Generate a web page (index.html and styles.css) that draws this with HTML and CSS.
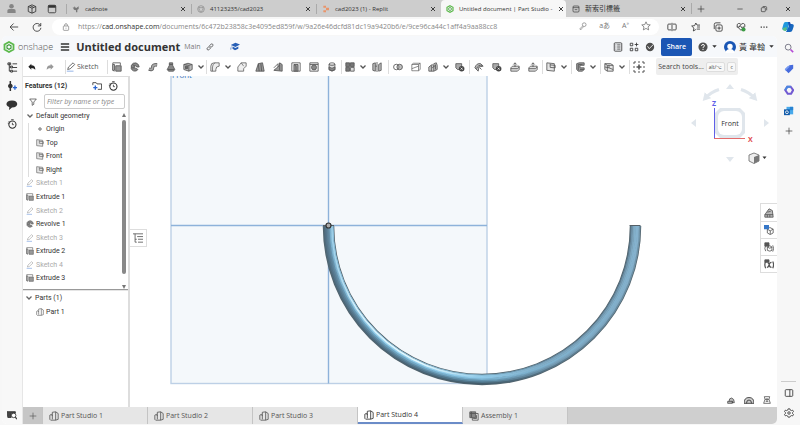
FILE: index.html
```html
<!DOCTYPE html>
<html lang="en">
<head>
<meta charset="utf-8">
<title>Untitled document | Part Studio 4</title>
<link rel="stylesheet" href="styles.css">
</head>
<body>
<svg class="defs" aria-hidden="true">
  <symbol id="close" viewBox="0 0 12 12"><path d="M3 3l6 6M9 3L3 9" stroke-width="1.4"/></symbol>
  <symbol id="plus" viewBox="0 0 12 12"><path d="M6 1v10M1 6h10"/></symbol>
  <symbol id="caret" viewBox="0 0 8 8"><path d="M1.500 2.500L4 5l2.500-2.500" stroke-width="1.300"/></symbol>
  <symbol id="solidcaret" viewBox="0 0 8 8"><path d="M1.500 2.500h5L4 5.500z" fill="currentColor" stroke="none"/></symbol>
  <symbol id="onshape" viewBox="0 0 12 12"><path d="M6 1l4.500 2.500v5L6 11 1.500 8.500v-5z" stroke="#5cb94b" stroke-width="1.800"/><path d="M6 3.700l2 1.100v2.400L6 8.300 4 7.200V4.800z" stroke="#3f9a3b" stroke-width="1.200"/></symbol>
  <symbol id="person" viewBox="0 0 12 12"><circle cx="6" cy="3.500" r="2.500" fill="#858585" stroke="none"/><path d="M1.500 11V8.500q0-2 2-2h5q2 0 2 2V11z" fill="#858585" stroke="none"/></symbol>
  <symbol id="cube" viewBox="0 0 12 12"><path d="M6 1l4.500 2v6L6 11 1.500 9V3zM1.500 3L6 5l4.500-2M6 5v6M3.800 2L8 4"/></symbol>
  <symbol id="window" viewBox="0 0 12 12"><rect x="1.500" y="1.500" width="9" height="9" rx="1.500"/><path d="M1.500 3h9" stroke-width="3"/></symbol>
  <symbol id="bird" viewBox="0 0 12 12"><path d="M1 3l2 1 1-2 2 3 4-3v4L8 7v4H6V8L3 7z" fill="#777" stroke="none"/></symbol>
  <symbol id="github" viewBox="0 0 12 12"><circle cx="6" cy="6" r="5" stroke="#888" stroke-width="1"/><path d="M4.800 11V8.500Q3 8 3 5.500V3l1.500 1h3L9 3v2.500Q9 8 7.200 8.500V11" stroke="#888"/></symbol>
  <symbol id="replit" viewBox="0 0 12 12"><path d="M2 1h4v3.300H2zM6 4.300h4.500v3.400H6zM2 7.700h4V11H2z" fill="#e9946a" stroke="none"/></symbol>
  <symbol id="page" viewBox="0 0 12 12"><rect x="1.500" y="1.500" width="9" height="9" rx="1.500"/><path d="M1.500 4h9M4 7h4"/></symbol>
  <symbol id="min" viewBox="0 0 12 12"><path d="M2 6h8"/></symbol>
  <symbol id="restore" viewBox="0 0 12 12"><rect x="2" y="4" width="6" height="6" rx="1"/><path d="M4 2.300h4.500Q10 2.300 10 4v4"/></symbol>
  <symbol id="back" viewBox="0 0 12 12"><path d="M11 6H1.500M5.500 1.800L1.300 6l4.200 4.200"/></symbol>
  <symbol id="reload" viewBox="0 0 12 12"><path d="M10.300 4.500A4.700 4.700 0 1 0 10.700 7M10.500 1.200v3.500H7"/></symbol>
  <symbol id="lock" viewBox="0 0 12 12"><rect x="2" y="4.500" width="8" height="6.500" rx="1"/><path d="M4 4.500V3q0-2 2-2t2 2v1.500M6 7v1.500"/></symbol>
  <symbol id="key" viewBox="0 0 12 12"><circle cx="7.800" cy="4" r="2.800"/><path d="M5.500 6L1.500 10v1h2l1-1.500L7 7"/></symbol>
  <symbol id="star" viewBox="0 0 12 12"><path d="M6 1l1.500 3.300 3.600.4-2.700 2.400.8 3.600L6 8.900l-3.200 1.800.8-3.600L.9 4.700l3.600-.4z"/></symbol>
  <symbol id="split" viewBox="0 0 12 12"><path d="M6 1v10M5 2.500H2q-1 0-1 1v5q0 1 1 1h3M7 2.500h3q1 0 1 1v5q0 1-1 1H7"/></symbol>
  <symbol id="favs" viewBox="0 0 12 12"><path d="M7 9l-3 1.800.7-3.500L2 4.800l3.500-.4L7 1.200l1.400 2.500H12M8.500 6H12M8 8.500h4"/></symbol>
  <symbol id="collect" viewBox="0 0 12 12"><rect x="3.500" y="3.500" width="7.500" height="7.500" rx="1.500"/><path d="M1.500 8.500V3q0-2 2-2H9M7.300 5.300v4M5.300 7.300h4"/></symbol>
  <symbol id="heart" viewBox="0 0 12 12"><path d="M6 10L1.500 5.500Q.5 2.500 3 1.800 5 1.500 6 3.200 7 1.500 9 1.800q2.500.7 1.500 3.700zM1 6h3l1-2 2 3 1-1h2"/><circle cx="9" cy="9" r="2.500" fill="#3b9b45" stroke="none"/></symbol>
  <symbol id="dots" viewBox="0 0 12 12"><path d="M2 6h1.500M5.300 6h1.500M8.500 6H10" stroke-width="1.500"/></symbol>
  <symbol id="copilot" viewBox="0 0 12 12"><path d="M3.500 1h4L5.500 9H2Q-.500 9 .500 6.500l1-3.500Q2 1 3.500 1z" fill="#2098dd" stroke="none"/><path d="M8 3h2q2.500 0 1.500 3l-1 3q-.500 2-2.500 2H4z" fill="#1767be" stroke="none"/><path d="M1 7l4-1-1 4Q1 10.500.7 8z" fill="#58bd86" stroke="none"/><path d="M6 1h2l1 3L7 6z" fill="#1b52b5" stroke="none"/></symbol>
  <symbol id="search" viewBox="0 0 12 12"><circle cx="5" cy="5" r="3.500" stroke="#667"/><path d="M7.800 7.800L11 11" stroke="#b54bd6" stroke-width="2"/></symbol>
  <symbol id="tag" viewBox="0 0 12 12"><path d="M1 6.500L6.500 1.500 11 1v4.500L5.500 11z" fill="#466bdc" stroke="none"/><path d="M1 6l4-4 2 1-5 5z" fill="#779af1" stroke="none"/></symbol>
  <symbol id="m365" viewBox="0 0 12 12"><path d="M4 2h4l3 4-2.500 4.500h-4L1.500 6z" stroke="#725ad2" stroke-width="2.500"/><path d="M1.500 6L4 2h4" stroke="#4a87df" stroke-width="2.500"/></symbol>
  <symbol id="outlook" viewBox="0 0 12 12"><path d="M3 1h8v9H3z" fill="#48a9eb" stroke="none"/><path d="M7 1h4v4H7z" fill="#2783d2" stroke="none"/><path d="M0 4h7v7H0z" fill="#125ba9" stroke="none"/><circle cx="3.500" cy="7.500" r="1.700" stroke="#fff"/></symbol>
  <symbol id="gear" viewBox="0 0 12 12"><path d="M5 1h2l.500 1.500 1.500.6 1.400-.5 1 1.700-1.100 1.100v1.400l1.100 1-1 1.700-1.400-.4-1.500.8L7 11H5l-.500-1.300L3 9l-1.400.4-1-1.700 1.100-1V5.400L.6 4.300l1-1.700 1.400.5 1.500-.6z"/><circle cx="6" cy="6" r="1.500"/></symbol>
  <symbol id="sidepane" viewBox="0 0 12 12"><rect x="1.500" y="2" width="9" height="8" rx="1"/><path d="M7 2v8"/></symbol>
  <symbol id="menu" viewBox="0 0 12 12"><path d="M1 2.300h10M1 6h10M1 9.700h10" stroke-width="1.800"/></symbol>
  <symbol id="link" viewBox="0 0 12 12"><path d="M5 7.500Q3.500 6 5 4.500l2.300-2.700q1.500-1 2.700 0t0 2.700L8.500 6M7 4.500Q8.500 6 7 7.500L4.700 10q-1.500 1-2.700 0t0-2.700L3.500 6"/></symbol>
  <symbol id="cap" viewBox="0 0 12 12"><path d="M1 3.500L6.500 1 12 3 6.500 6zM3 5.500l3.500 1.800L10 5.500V8L6 10 3 8zM1.500 4v5H.500z" fill="#2860b6" stroke="none"/></symbol>
  <symbol id="sheet" viewBox="0 0 12 12"><rect x="1.500" y="1" width="9" height="10" rx="1"/><path d="M3 3.500h1M5 3.500h4M3 6h1M5 6h4M3 8.500h1M5 8.500h4"/></symbol>
  <symbol id="apps" viewBox="0 0 12 12"><path d="M1.500 1.500h3v3h-3zM1.500 7.500h3v3h-3zM7.500 7.500h3v3h-3zM9 .8v4.400M6.800 3h4.400"/></symbol>
  <symbol id="globe" viewBox="0 0 12 12"><circle cx="6" cy="6" r="5" fill="#505050" stroke="none"/><path d="M3 5l2 3 5-5" stroke="#fff"/></symbol>
  <symbol id="help" viewBox="0 0 12 12"><circle cx="6" cy="6" r="5.500" fill="#505050" stroke="none"/><path d="M4.200 4.700Q4.300 3 6 3t1.800 1.500Q7.800 5.500 6 6.500v.8M6 8.300v1.300" stroke="#fff" stroke-width="1.200"/></symbol>
  <symbol id="user" viewBox="0 0 12 12"><circle cx="6" cy="6" r="6" fill="#1956b5" stroke="none"/><circle cx="6" cy="5.500" r="2.700" fill="#fff" stroke="none"/><path d="M1.500 12Q2 8 6 8t4.500 4z" fill="#fff" stroke="none"/></symbol>
  <symbol id="tree" viewBox="0 0 12 12"><path d="M2.500 1v9h2M2.500 5.500h2M6 2h5M6.500 6H11M6.500 10H11" /><path d="M1 1h3v2H1zM4 4.500h2v2H4zM4 9h2v2H4z"/></symbol>
  <symbol id="undo" viewBox="0 0 12 12"><path d="M5 1v2.500q6 0 6 6.500Q9 7.500 5 7.500V10L.5 5.500z" fill="currentColor" stroke="none"/></symbol>
  <symbol id="redo" viewBox="0 0 12 12"><path d="M7 1v2.500q-6 0-6 6.500Q3 7.500 7 7.500V10l4.500-4.500z" fill="currentColor" stroke="none"/></symbol>
  <symbol id="pencil" viewBox="0 0 12 12"><path d="M2 9l1-3 5.500-5 2 2L5 8.200z"/><path d="M1 11h8" stroke="#7fa5e3"/></symbol>
  <symbol id="extrude" viewBox="0 0 12 12"><path d="M1 1h9v3M1 1v9l2 1" /><path d="M4.500 4.500H11V11H4.500z" fill="#999"/><path d="M1 3h2v7H1z" fill="#ccc"/></symbol>
  <symbol id="revolve" viewBox="0 0 12 12"><path d="M10 3Q7.500 0 4 1.500T1.500 8Q3.500 12 8 10.500L9.500 9 7 7.500Q5 8 5 6t2-1.500L8 6h3z" fill="#888"/><path d="M3 3l3 2M2 7h3"/></symbol>
  <symbol id="sweep" viewBox="0 0 12 12"><path d="M1 8.500q4.500 1.500 4.500-2T11 3.500" stroke="#666" stroke-width="4.200"/><path d="M1.500 8.500q4 1.500 4-2T10.500 3.500" stroke="#aaa" stroke-width="2"/></symbol>
  <symbol id="loft" viewBox="0 0 12 12"><path d="M4 1h4v3l2.500 5-1.500 2H3L1.500 9 4 4z" fill="#888"/><path d="M4 3h4M2 9h8"/></symbol>
  <symbol id="solid" viewBox="0 0 12 12"><path d="M1 3l5-1.500L11 3v6l-4 2-6-2z" fill="#bbb"/><path d="M1 3l6 1 4-1M7 4v7"/><path d="M3 5h2.500v3H3z" fill="#666"/></symbol>
  <symbol id="fillet" viewBox="0 0 12 12"><path d="M1 11V5q0-4 4-4h6v4q-4 0-4 4v2z" fill="#eee" stroke-width=".9"/><path d="M3 11V6q0-3 3-5" stroke-width=".8"/></symbol>
  <symbol id="chamfer" viewBox="0 0 12 12"><path d="M1 11V6l4-5h6v4L8 8v3z" fill="#eee" stroke-width=".9"/><path d="M5 1l3 4" stroke-width=".8"/></symbol>
  <symbol id="wedge" viewBox="0 0 12 12"><path d="M1 10L7 5l1-4 3 2v8z" fill="#9a9a9a"/><path d="M1 7l5-5v4M8 3v7"/></symbol>
  <symbol id="draft" viewBox="0 0 12 12"><path d="M1 11L4 2l5-1 2 10z" fill="#999"/><path d="M4 2l1 9M7 2l1 9"/></symbol>
  <symbol id="shell" viewBox="0 0 12 12"><path d="M1 1h10v10H1z"/><path d="M3.500 3h5v8h-5z" fill="#999"/><path d="M3.500 3L6 5v6"/></symbol>
  <symbol id="hole" viewBox="0 0 12 12"><path d="M1 1h10v10H1z" fill="#eee"/><circle cx="6" cy="6.500" r="3" fill="#888"/><path d="M1 3h10"/></symbol>
  <symbol id="cylinder" viewBox="0 0 12 12"><path d="M2.500 2.500v7q3.500 3 7 0v-7" fill="#ddd"/><ellipse cx="6" cy="2.500" rx="3.500" ry="1.500"/><path d="M2.500 6q3.500 3 7 0v3q-3.500 3-7 0z" fill="#888"/></symbol>
  <symbol id="pattern" viewBox="0 0 12 12"><path d="M1 1h4.500v4.500H1zM6.500 1H11v4.500H6.500zM1 6.500h4.500V11H1z" fill="#777"/><path d="M6.500 6.500H11V11H6.500z" fill="#ddd"/></symbol>
  <symbol id="mirror" viewBox="0 0 12 12"><path d="M1 2l3-1v10l-3-1zM8 3l3-2v9l-3 1z" fill="#bbb"/><path d="M6 0v12M4 5h2"/></symbol>
  <symbol id="boolean" viewBox="0 0 12 12"><circle cx="4" cy="6" r="3.300"/><circle cx="8" cy="6" r="3.300" fill="#8888"/></symbol>
  <symbol id="splitpart" viewBox="0 0 12 12"><path d="M1 3l2-1.500h8V9l-2 1.500H1zM1 3h8l2-1.500M9 3v7.500M1 8l8-3" stroke-width=".8"/></symbol>
  <symbol id="transform" viewBox="0 0 12 12"><path d="M1 11V6l4-3 2 2v6zM7 5V2l3-1 1 3v5L7 11" fill="#ccc"/><path d="M4 4v7M9 3v6M5 7l4-3"/></symbol>
  <symbol id="delete" viewBox="0 0 12 12"><path d="M1 2h7v7H3L1 7z" fill="#aaa"/><circle cx="8" cy="8" r="3.300" fill="#444" stroke="none"/><path d="M6.800 6.800l2.400 2.400M9.200 6.800L6.800 9.200" stroke="#fff" stroke-width=".9"/></symbol>
  <symbol id="sheetmetal" viewBox="0 0 12 12"><path d="M1 7q2-6 7-5l3 3-5 1-1 5z" fill="#bbb"/><path d="M3 8q2-5 7-4M7 7l2 2"/></symbol>
  <symbol id="flange" viewBox="0 0 12 12"><path d="M1 7l2-2h8v4l-2 2H1z" fill="#ddd"/><path d="M1 8h8l2-2M6 6V1L4 3M6 1l2 2"/></symbol>
  <symbol id="plane" viewBox="0 0 12 12"><path d="M1 1l9 1v9L1 10z" fill="#e5e5e5"/><path d="M5 2v4.500l6 .5V4L5 3.500"/></symbol>
  <symbol id="frame" viewBox="0 0 12 12"><path d="M2 2l3-1h6v3H6v3h5v2L9 11H4L2 9z" fill="#999"/><path d="M4 3v7M4 3h5M6 9h5"/></symbol>
  <symbol id="surface" viewBox="0 0 12 12"><path d="M1 2h7l3 2v7H4L1 9z" fill="#e5e5e5"/><path d="M1 2l3 2h7M4 4v7M6 4v3l5 2M1 6l5 1"/></symbol>
  <symbol id="addtool" viewBox="0 0 12 12"><path d="M1 3V1h2M5 1h2M9 1h2v2M11 5v2M11 9v2H9M7 11H5M3 11H1V9M1 7V5"/><path d="M6 3.500v5M3.500 6h5" stroke-width="1.600"/></symbol>
  <symbol id="insert" viewBox="0 0 12 12"><path d="M4 0v12" stroke-width="1.800"/><circle cx="4" cy="6" r="2.300" fill="#333"/><path d="M9.500 5.500v5M7 8h5" stroke="#2864d0" stroke-width="1.600"/></symbol>
  <symbol id="chat" viewBox="0 0 12 12"><path d="M6 1.500c7 0 7 7 0 7L3 11l.3-3C-1.500 6.500 0 1.500 6 1.500z" fill="#333" stroke="none"/></symbol>
  <symbol id="clock" viewBox="0 0 12 12"><circle cx="6.500" cy="6.700" r="4.300" stroke-width="1.300"/><path d="M6.500 4.500v2.300h1.700M5 .8h3M1 5h2M2 2.500l1.500 1.500"/></symbol>
  <symbol id="folder" viewBox="0 0 12 12"><path d="M1 5V2h4l1 1.500h5.500V10H7"/><path d="M4 5.500v5M1.500 8h5" stroke="#2864d0" stroke-width="1.600"/></symbol>
  <symbol id="filter" viewBox="0 0 12 12"><path d="M1 1.500h10L7.200 6v3.500L4.800 11V6z"/></symbol>
  <symbol id="origin" viewBox="0 0 12 12"><circle cx="6" cy="6" r="2" fill="#bbb"/></symbol>
  <symbol id="part" viewBox="0 0 12 12"><path d="M1 5l2-1 1 2V1.500L8 1l3 2v7l-3 1H2L1 10zM4 6v4M8 1v10"/></symbol>
  <symbol id="assembly" viewBox="0 0 12 12"><path d="M1 1h7v7H1z" fill="#888"/><path d="M8 3h3v8H4V8M5 9h4V5M1 3h7M3 1v7"/></symbol>
  <symbol id="zoomtab" viewBox="0 0 12 12"><path d="M0 2h10v2H5v5H1z" fill="#444"/><circle cx="8" cy="6.500" r="2.700" fill="#fff"/><path d="M10 8.500l2 2.500" stroke-width="1.500"/></symbol>
  <symbol id="listtree" viewBox="0 0 12 12"><path d="M0 1h12M2.500 1v10h2M5 4.300h7M2.500 7.500h2M6 7.500h6M6 11h6"/></symbol>
  <symbol id="props" viewBox="0 0 12 12"><path d="M1 8l5-7 4 2 1 8H1z" fill="#bbb"/><path d="M1 8h10M4 8v3M7 8v3M4 5l4-1"/></symbol>
  <symbol id="config" viewBox="0 0 12 12"><path d="M7 3l4 2v4.500L7.500 11.500 4 9.500V5zM4 5l3.500 2L11 5M7.500 7v4"/><path d="M0 0h6v5H0z" fill="#3577c8" stroke="none"/></symbol>
  <symbol id="configpart" viewBox="0 0 12 12"><path d="M1 1h5v4H1z" fill="#555"/><path d="M2 4Q0 8 2 11M10.500 4q2 4 0 7.500M4 6l3-1.500L9.500 6v4L7 11 4 10zM4 6l3 1.500L9.500 6"/></symbol>
  <symbol id="varx" viewBox="0 0 12 12"><path d="M1 1h5v3H1z" fill="#555"/><path d="M2 3Q0 7 2 11M10.500 3q2 4 0 8M3.500 10q2 0 2.500-3t3-3M4.500 5q2 0 2 2.500T9 10" stroke-width="1.500"/></symbol>
  <symbol id="tape" viewBox="0 0 12 12"><path d="M1 8h7v3H1zM3 8q0-5 4-5 4 1 4 7H8V8" fill="#bbb"/></symbol>
  <symbol id="protractor" viewBox="0 0 12 12"><path d="M0 10q0-7 6-7t6 7zM3 10q0-4 3-4t3 4" fill="#ccc"/></symbol>
  <symbol id="scale" viewBox="0 0 12 12"><path d="M2 1h8L9 5H3zM3 5L1 11h10L9 5M4 8h4M6 3v5"/></symbol>
</svg>

<div class="browser">
  <nav class="tabstrip" aria-label="Browser tabs">
    <div class="corner"><svg class="ic"><use href="#person"/></svg><svg class="ic s10"><use href="#cube"/></svg><svg class="ic s10"><use href="#window"/></svg></div>
    <div class="btab"><svg class="ic s8"><use href="#bird"/></svg><span>cadnote</span><button aria-label="Close tab"><svg class="ic s8"><use href="#close"/></svg></button></div>
    <div class="btab"><svg class="ic s8"><use href="#github"/></svg><span>41123235/cad2023</span><button aria-label="Close tab"><svg class="ic s8"><use href="#close"/></svg></button></div>
    <div class="btab"><svg class="ic s8"><use href="#replit"/></svg><span>cad2023 (1) - Replit</span><button aria-label="Close tab"><svg class="ic s8"><use href="#close"/></svg></button></div>
    <div class="btab active"><svg class="ic s8"><use href="#onshape"/></svg><span>Untitled document | Part Studio -</span><button aria-label="Close tab"><svg class="ic s8"><use href="#close"/></svg></button></div>
    <div class="btab last"><svg class="ic s8"><use href="#page"/></svg><span>新索引標籤</span><button aria-label="Close tab"><svg class="ic s8"><use href="#close"/></svg></button></div>
    <button class="newtab" aria-label="New tab"><svg class="ic s8"><use href="#plus"/></svg></button>
    <div class="winbtns"><button aria-label="Minimize"><svg class="ic s8"><use href="#min"/></svg></button><button aria-label="Restore"><svg class="ic s8"><use href="#restore"/></svg></button><button aria-label="Close"><svg class="ic s8"><use href="#close"/></svg></button></div>
  </nav>

  <div class="address">
    <button aria-label="Back"><svg class="ic s10"><use href="#back"/></svg></button>
    <button aria-label="Reload"><svg class="ic s10"><use href="#reload"/></svg></button>
    <div class="pill">
      <svg class="ic s8"><use href="#lock"/></svg>
      <a class="url" href="#">https://<b>cad.onshape.com</b>/documents/6c472b23858c3e4095ed859f/w/9a26e46dcfd81dc19a9420b6/e/9ce96ca44c1aff4a9aa88cc8</a>
      <div class="pillicons"><svg class="ic s8"><use href="#key"/></svg><span>aあ</span><span>A<sup>»</sup></span><svg class="ic s10"><use href="#star"/></svg></div>
    </div>
    <div class="extensions">
      <button aria-label="Split screen"><svg class="ic s10"><use href="#split"/></svg></button><button aria-label="Favorites"><svg class="ic s10"><use href="#favs"/></svg></button><button aria-label="Collections"><svg class="ic s10"><use href="#collect"/></svg></button><button aria-label="Essentials"><svg class="ic s10"><use href="#heart"/></svg></button><button aria-label="More"><svg class="ic s10"><use href="#dots"/></svg></button>
      <button aria-label="Copilot"><svg class="ic s12"><use href="#copilot"/></svg></button>
    </div>
  </div>

  <div class="body">
    <div class="app">
      <header class="docbar">
        <svg class="ic s12"><use href="#onshape"/></svg><span class="brand">onshape</span>
        <button class="menu" aria-label="Menu"><svg class="ic s10"><use href="#menu"/></svg></button>
        <h1>Untitled document</h1><span class="branch">Main</span>
        <svg class="ic s8"><use href="#link"/></svg><svg class="ic s10 cap"><use href="#cap"/></svg>
        <div class="account">
          <svg class="ic s10"><use href="#sheet"/></svg><svg class="ic s10"><use href="#apps"/></svg><svg class="ic s10"><use href="#globe"/></svg>
          <button class="share">Share</button>
          <svg class="ic s10"><use href="#help"/></svg><svg class="ic s6"><use href="#solidcaret"/></svg>
          <svg class="ic s12"><use href="#user"/></svg><span class="name">黃 韋翰</span><svg class="ic s6"><use href="#solidcaret"/></svg>
        </div>
      </header>

      <div class="work">
        <aside class="rail">
          <button aria-label="Feature list"><svg class="ic"><use href="#tree"/></svg></button>
          <button aria-label="Insert"><svg class="ic s10"><use href="#insert"/></svg></button>
          <button aria-label="Comments"><svg class="ic s12"><use href="#chat"/></svg></button>
          <button aria-label="History"><svg class="ic s10"><use href="#clock"/></svg></button>
          <button class="bottom" aria-label="Tab manager"><svg class="ic s10"><use href="#zoomtab"/></svg></button>
        </aside>
        <div class="main">
          <div class="toolbar">
            <div class="group history"><button aria-label="Undo"><svg class="ic s8"><use href="#undo"/></svg></button><button class="dim" aria-label="Redo"><svg class="ic s8"><use href="#redo"/></svg></button></div>
            <div class="group"><button class="sketch"><svg class="ic s10"><use href="#pencil"/></svg>Sketch</button></div>
            <div class="group"><button aria-label="Extrude"><svg class="ic s10"><use href="#extrude"/></svg></button><button aria-label="Revolve"><svg class="ic s10"><use href="#revolve"/></svg></button><button aria-label="Sweep"><svg class="ic s10"><use href="#sweep"/></svg></button><button aria-label="Loft"><svg class="ic s10"><use href="#loft"/></svg></button><button class="drop" aria-label="Thicken"><svg class="ic s10"><use href="#solid"/></svg><svg class="ic s8"><use href="#caret"/></svg></button></div>
            <div class="group"><button class="drop" aria-label="Fillet"><svg class="ic s10"><use href="#fillet"/></svg><svg class="ic s8"><use href="#caret"/></svg></button><button aria-label="Chamfer"><svg class="ic s10"><use href="#chamfer"/></svg></button><button aria-label="Draft"><svg class="ic s10"><use href="#draft"/></svg></button><button aria-label="Rib"><svg class="ic s10"><use href="#wedge"/></svg></button><button aria-label="Shell"><svg class="ic s10"><use href="#shell"/></svg></button><button aria-label="Hole"><svg class="ic s10"><use href="#hole"/></svg></button><button aria-label="Thread"><svg class="ic s10"><use href="#cylinder"/></svg></button></div>
            <div class="group loose"><button class="drop" aria-label="Pattern"><svg class="ic s10"><use href="#pattern"/></svg><svg class="ic s8"><use href="#caret"/></svg></button><button aria-label="Mirror"><svg class="ic s10"><use href="#mirror"/></svg></button></div>
            <div class="group"><button aria-label="Boolean"><svg class="ic s10"><use href="#boolean"/></svg></button><button aria-label="Split"><svg class="ic s10"><use href="#splitpart"/></svg></button><button class="drop" aria-label="Transform"><svg class="ic s10"><use href="#transform"/></svg><svg class="ic s8"><use href="#caret"/></svg></button><button aria-label="Delete part"><svg class="ic s10"><use href="#delete"/></svg></button></div>
            <div class="group"><button aria-label="Modify fillet"><svg class="ic s10"><use href="#sheetmetal"/></svg></button><button aria-label="Delete face"><svg class="ic s10"><use href="#delete"/></svg></button><button aria-label="Move face"><svg class="ic s10"><use href="#flange"/></svg></button><button aria-label="Replace face"><svg class="ic s10"><use href="#flange"/></svg></button></div>
            <div class="group loose"><button class="drop" aria-label="Plane"><svg class="ic s10"><use href="#plane"/></svg><svg class="ic s8"><use href="#caret"/></svg></button></div>
            <div class="group loose"><button class="drop" aria-label="Frame"><svg class="ic s10"><use href="#frame"/></svg><svg class="ic s8"><use href="#caret"/></svg></button></div>
            <div class="group loose"><button class="drop" aria-label="Surface"><svg class="ic s10"><use href="#surface"/></svg><svg class="ic s8"><use href="#caret"/></svg></button></div>
            <div class="group end"><button aria-label="Add custom features"><svg class="ic s12"><use href="#addtool"/></svg></button></div>
            <button class="searchtools">Search tools...<kbd>alt/⌥</kbd><kbd>c</kbd></button>
          </div>

          <div class="studio">
            <section class="panel">
              <div class="panelhead"><h2>Features (12)</h2><svg class="ic s10"><use href="#folder"/></svg><svg class="ic s10"><use href="#clock"/></svg></div>
              <div class="filter"><svg class="ic s8"><use href="#filter"/></svg><input type="text" placeholder="Filter by name or type" aria-label="Filter by name or type"></div>
              <div class="features">
                <ul class="list">
                  <li><svg class="ic s8"><use href="#caret"/></svg>Default geometry</li>
                  <li class="nested"><ul>
                    <li><svg class="ic s8"><use href="#origin"/></svg>Origin</li>
                    <li><svg class="ic s8"><use href="#plane"/></svg>Top</li>
                    <li><svg class="ic s8"><use href="#plane"/></svg>Front</li>
                    <li><svg class="ic s8"><use href="#plane"/></svg>Right</li>
                  </ul></li>
                  <li class="off"><svg class="ic s8"><use href="#pencil"/></svg>Sketch 1</li>
                  <li><svg class="ic s8"><use href="#extrude"/></svg>Extrude 1</li>
                  <li class="off"><svg class="ic s8"><use href="#pencil"/></svg>Sketch 2</li>
                  <li><svg class="ic s8"><use href="#revolve"/></svg>Revolve 1</li>
                  <li class="off"><svg class="ic s8"><use href="#pencil"/></svg>Sketch 3</li>
                  <li><svg class="ic s8"><use href="#extrude"/></svg>Extrude 2</li>
                  <li class="off"><svg class="ic s8"><use href="#pencil"/></svg>Sketch 4</li>
                  <li><svg class="ic s8"><use href="#extrude"/></svg>Extrude 3</li>
                </ul>
                <div class="scroll"><i class="up"></i><i class="thumb"></i><i class="down"></i></div>
              </div>
              <div class="rollback"></div>
              <ul class="parts">
                <li><svg class="ic s8"><use href="#caret"/></svg>Parts (1)</li>
                <li class="sub"><svg class="ic s8"><use href="#part"/></svg>Part 1</li>
              </ul>
            </section>

            <div class="canvas">
              <svg class="scene" viewBox="130 76 647 331" preserveAspectRatio="xMinYMin slice" role="img" aria-label="Model view">
                <defs>
                  <linearGradient id="g1" gradientUnits="userSpaceOnUse" x1="323" x2="641" y1="0" y2="0"><stop offset="0" stop-color="#4f6a7a"/><stop offset=".5" stop-color="#435c6b"/><stop offset="1" stop-color="#6f94aa"/></linearGradient>
                  <linearGradient id="g2" gradientUnits="userSpaceOnUse" x1="323" x2="641" y1="0" y2="0"><stop offset="0" stop-color="#54748a"/><stop offset=".5" stop-color="#4f7489"/><stop offset=".75" stop-color="#7298b0"/><stop offset="1" stop-color="#86b2ce"/></linearGradient>
                  <linearGradient id="g3" gradientUnits="userSpaceOnUse" x1="323" x2="641" y1="0" y2="0"><stop offset="0" stop-color="#5b7f95"/><stop offset=".5" stop-color="#6292ad"/><stop offset=".75" stop-color="#7ba5bf"/><stop offset="1" stop-color="#86b4d0"/></linearGradient>
                  <linearGradient id="g4" gradientUnits="userSpaceOnUse" x1="323" x2="641" y1="0" y2="0"><stop offset="0" stop-color="#638ba4"/><stop offset=".15" stop-color="#6a9fbc"/><stop offset=".5" stop-color="#7bb2d0"/><stop offset="1" stop-color="#83b0cb"/></linearGradient>
                  <linearGradient id="g5" gradientUnits="userSpaceOnUse" x1="323" x2="641" y1="0" y2="0"><stop offset="0" stop-color="#78abc8"/><stop offset=".18" stop-color="#94d0ed"/><stop offset=".5" stop-color="#8fc9e8"/><stop offset=".7" stop-color="#82aec8"/><stop offset="1" stop-color="#7ca5be"/></linearGradient>
                  <linearGradient id="g6" gradientUnits="userSpaceOnUse" x1="323" x2="641" y1="0" y2="0"><stop offset="0" stop-color="#8ac4e2"/><stop offset=".1" stop-color="#d0effc"/><stop offset=".3" stop-color="#e6faff"/><stop offset=".5" stop-color="#93cdeb"/><stop offset=".7" stop-color="#7ba5be"/><stop offset="1" stop-color="#6d91a8"/></linearGradient>
                  <linearGradient id="g7" gradientUnits="userSpaceOnUse" x1="323" x2="641" y1="0" y2="0"><stop offset="0" stop-color="#8abfdc"/><stop offset=".3" stop-color="#8dbdd5"/><stop offset=".5" stop-color="#7aabc5"/><stop offset=".7" stop-color="#62849a"/><stop offset="1" stop-color="#587486"/></linearGradient>
                  <marker id="tip" viewBox="0 0 8 8" refX="4" refY="4" markerWidth="9" markerHeight="9" markerUnits="userSpaceOnUse" orient="auto-start-reverse"><path d="M0 0l7 4-7 4z" fill="#e0e6ec"/></marker>
                </defs>
                <rect x="171" y="60" width="316" height="323.500" fill="#f4f8fb" stroke="#bdd0e6" stroke-width="1.400"/>
                <text x="172" y="78" class="planename">Front</text>
                <path d="M171 225.500h316M328.500 60v323.500" stroke="#8db2da" fill="none" stroke-width="1.400"/>
                <g fill="none" stroke-width="2">
                  <path d="M328.500 226a153.500 153.500 0 0 0 307 0" stroke="#52636c" stroke-width="11.500"/>
                  <path d="M324.500 226a157.500 157.500 0 0 0 315 0" stroke="url(#g1)"/>
                  <path d="M326 226a156 156 0 0 0 312 0" stroke="url(#g2)"/>
                  <path d="M327.500 226a154.500 154.500 0 0 0 309 0" stroke="url(#g3)"/>
                  <path d="M329 226a153 153 0 0 0 306 0" stroke="url(#g4)"/>
                  <path d="M330.500 226a151.500 151.500 0 0 0 303 0" stroke="url(#g5)"/>
                  <path d="M332 226a150 150 0 0 0 300 0" stroke="url(#g6)"/>
                  <path d="M333 226a149 149 0 0 0 298 0" stroke="url(#g7)" stroke-width="1"/>
                  <path d="M323 225.500h11M629.500 225.500h11" stroke="#555f66" stroke-width="1"/>
                </g>
                <circle cx="328.500" cy="225.500" r="2.500" fill="#aaa" stroke="#333" stroke-width="1.200"/>
                <g fill="#e0e6ec">
                  <path d="M730 84l4 5h-8zM730 162l-4-5h8zM691 123l5-4v8zM769 123l-5-4v8z"/>
                  <path d="M719 89.500q-8 2.500-14 9" fill="none" stroke="#e0e6ec" stroke-width="3" marker-end="url(#tip)"/>
                  <path d="M741 89.500q8 2.500 14 9" fill="none" stroke="#e0e6ec" stroke-width="3" marker-end="url(#tip)"/>
                  <path d="M720 108h20l5 5v20l-5 5h-20l-5-5v-20z"/>
                </g>
                <rect x="718" y="111" width="24" height="24" rx="6" fill="#fff"/>
                <text x="730" y="125.500" text-anchor="middle" class="face">Front</text>
                <path d="M714.500 108v31" stroke="#5f5fe8"/><path d="M714 138.500h31" stroke="#e36a6a"/>
                <text x="712" y="106" class="axis z">Z</text><text x="748" y="141.500" class="axis x">X</text>
                <path d="M749 155l5-2 5 2v6l-5 2.500-5-2.500z" fill="#eee" stroke="#666" stroke-width=".8"/><path d="M754 157l5-2v6l-5 2.500z" fill="#777"/><path d="M762.500 156.500h4l-2 2.500z" fill="#333"/>
              </svg>
              <button class="treetoggle" aria-label="Toggle list"><svg class="ic s10"><use href="#listtree"/></svg></button>
              <div class="sidebuttons"><button aria-label="Appearance"><svg class="ic s10"><use href="#props"/></svg></button><button aria-label="Configurations"><svg class="ic s10"><use href="#config"/></svg></button><button aria-label="Configured parts"><svg class="ic s10"><use href="#configpart"/></svg></button><button aria-label="Variables"><svg class="ic s10"><use href="#varx"/></svg></button></div>
              <div class="measure"><svg class="ic s8"><use href="#tape"/></svg><svg class="ic s10"><use href="#protractor"/></svg><svg class="ic s8"><use href="#scale"/></svg></div>
            </div>
          </div>

          <nav class="doctabs" aria-label="Document tabs">
            <button class="add" aria-label="Add tab"><svg class="ic s8"><use href="#plus"/></svg></button>
            <button><svg class="ic s10"><use href="#part"/></svg>Part Studio 1</button>
            <button><svg class="ic s10"><use href="#part"/></svg>Part Studio 2</button>
            <button><svg class="ic s10"><use href="#part"/></svg>Part Studio 3</button>
            <button class="current"><svg class="ic s10"><use href="#part"/></svg>Part Studio 4</button>
            <button><svg class="ic s10"><use href="#assembly"/></svg>Assembly 1</button>
          </nav>
        </div>
      </div>
    </div>
    <aside class="edgebar">
      <button aria-label="Search"><svg class="ic s10"><use href="#search"/></svg></button>
      <button aria-label="Shopping"><svg class="ic s10"><use href="#tag"/></svg></button>
      <button aria-label="Microsoft 365"><svg class="ic s10"><use href="#m365"/></svg></button>
      <button aria-label="Outlook"><svg class="ic s10"><use href="#outlook"/></svg></button>
      <button aria-label="Customize"><svg class="ic s8"><use href="#plus"/></svg></button>
      <div class="edgebottom"><button aria-label="Side pane"><svg class="ic s10"><use href="#sidepane"/></svg></button><button aria-label="Settings"><svg class="ic s10"><use href="#gear"/></svg></button></div>
    </aside>
  </div>
</div>
</body>
</html>
```
FILE: styles.css
```css
* { box-sizing: border-box; }
body { margin: 0; font: 7px/10px "Open Sans", "Noto Sans CJK TC", sans-serif; color: #333; background: #f7f7f7; }
button { border: 0; padding: 0; background: none; font: inherit; color: inherit; display: flex; align-items: center; justify-content: center; }
ul { list-style: none; margin: 0; padding: 0; }
h1, h2 { margin: 0; }
.defs { position: absolute; width: 0; height: 0; }
.ic { width: 11px; height: 11px; flex: none; fill: none; stroke: currentColor; stroke-width: 1; }
.s6 { width: 7px; height: 7px; }
.s8 { width: 8px; height: 8px; }
.s10 { width: 10px; height: 10px; }
.s12 { width: 12px; height: 12px; }

.browser { display: flex; flex-direction: column; height: 100vh; overflow: hidden; }

.tabstrip { display: flex; height: 17px; flex: none; background: #cdcdcd; font-size: 6px; }
.corner { width: 66px; display: flex; align-items: center; padding-left: 6px; gap: 10px; }
.btab { width: 125px; display: flex; align-items: center; gap: 5px; padding: 0 4px 0 5px; white-space: nowrap; }
.btab::before { content: ""; width: 1px; height: 10px; background: #aaa; margin-left: -5px; }
.btab span { flex: 1; }
.btab.active { background: #f7f7f7; border-radius: 4px 4px 0 0; }
.btab.active::before, .btab.last::before { background: none; }
.btab.last { font-size: 7px; }
.newtab { width: 18px; border-left: 1px solid #aaa; margin: 3px 0; }
.winbtns { margin-left: auto; display: flex; gap: 16px; padding-right: 8px; }

.address { display: flex; align-items: center; height: 19px; flex: none; padding-left: 9px; }
.address > button + button { margin-left: 13px; }
.pill { flex: 1; height: 16px; margin-left: 10px; display: flex; align-items: center; gap: 8px; padding: 0 8px 0 10px; background: #fff; border-radius: 8px; min-width: 0; color: #777; }
.url { flex: 1; color: #888; text-decoration: none; white-space: nowrap; }
.url b { font-weight: 400; color: #333; }
.pillicons { display: flex; align-items: center; gap: 12px; }
.pillicons sup { font-size: 5px; line-height: 5px; }
.extensions { display: flex; align-items: center; gap: 13px; padding: 0 6px 0 8px; }

.body { display: flex; flex: 1; min-height: 0; }
.app { flex: 1; display: flex; flex-direction: column; min-width: 0; margin: 0 0 1px 2px; border-radius: 5px; overflow: hidden; background: #fff; }
.docbar { display: flex; align-items: center; height: 21px; flex: none; background: #f6f8fb; padding: 0 2px 0 1px; }
.brand { font: 300 9px/14px "Open Sans", sans-serif; margin-left: 3px; color: #555; }
.menu { margin: 0 6px 0 7px; }
.docbar h1 { font: 700 11px/16px "Open Sans", sans-serif; }
.branch { color: #777; margin: 0 5px 0 4px; }
.cap { margin-left: 16px; }
.account { margin-left: auto; display: flex; align-items: center; gap: 6px; }
.account .s6 { margin-left: -3px; }
.share { width: 31px; height: 18px; border-radius: 2px; background: #1b56b4; color: #fff; font-weight: 600; }
.name { font-size: 8px; margin-left: -3px; white-space: nowrap; }
.work { display: flex; flex: 1; min-height: 0; }
.rail { width: 21px; flex: none; display: flex; flex-direction: column; align-items: center; gap: 8px; padding: 5px 0 4px; background: #f8f8f8; border-right: 1px solid #e6e6e6; }
.rail .bottom { margin-top: auto; }
.main { flex: 1; display: flex; flex-direction: column; min-width: 0; }

.toolbar { display: flex; align-items: center; height: 19px; flex: none; color: #555; white-space: nowrap; }
.group { display: flex; gap: 1px; height: 14px; padding-right: 1px; border-right: 1px solid #ddd; }
.group button { min-width: 17px; }
.group.loose { padding-right: 3px; }
.group.history { padding-right: 7px; color: #222; }
.group.end { border: 0; }
.group .sketch { width: 40px; gap: 1px; justify-content: flex-start; }
.group .drop { width: 25px; padding-left: 3px; justify-content: flex-start; gap: 4px; }
.group .dim { color: #999; }
.searchtools { height: 17px; width: 82px; background: #eee; margin-left: 8px; gap: 2px; border-radius: 2px; color: #444; }
kbd { font: 5px/8px "Open Sans", sans-serif; padding: 0 2px; background: #f8f8f8; border: 1px solid #ddd; border-radius: 2px; }

.studio { flex: 1; display: flex; min-height: 0; }
.panel { width: 107px; flex: none; border-top: 1px solid #ddd; border-right: 2px solid #ddd; font-family: Roboto, sans-serif; }
.panelhead { display: flex; align-items: center; height: 17px; padding: 0 10px 0 2px; gap: 6px; }
.panelhead h2 { flex: 1; font: 700 7px/10px Roboto, sans-serif; }
.filter { display: flex; align-items: center; gap: 7px; padding: 0 3px 0 6px; }
.filter input { flex: 1; min-width: 0; height: 15px; border: 1px solid #ccc; border-radius: 2px; padding: 0 2px; font: italic 7px/10px "Open Sans", sans-serif; }
.filter input::placeholder { color: #888; }
.features { display: flex; }
.list { flex: 1; height: 176px; display: flex; flex-direction: column; }
.list li { flex: 1 1 0; min-height: 0; display: flex; align-items: center; gap: 2px; padding-left: 3px; }
.list .nested { flex-grow: 4; padding-left: 5px; align-items: stretch; }
.nested ul { flex: 1; display: flex; flex-direction: column; border-left: 1px solid #ddd; padding-left: 4px; }
.off { color: #aaa; }
.list svg, .parts svg { color: #666; }
.list .off svg { color: #aaa; }
.scroll { width: 9px; padding: 4px 2px 0; display: flex; flex-direction: column; align-items: center; height: 180px; }
.thumb { width: 4px; flex: 1; background: #888; border-radius: 2px; margin: 3px 0 11px; }
.up, .down { border: 2px solid transparent; }
.up { border-top: 0; border-bottom: 4px solid #777; }
.down { border-bottom: 0; border-top: 4px solid #777; }
.rollback { height: 2px; border-top: 1px solid #999; border-bottom: 1px solid #e5e5e5; }
.parts li { display: flex; align-items: center; height: 14px; gap: 2px; padding-left: 2px; }
.parts .sub { padding-left: 13px; }

.canvas { flex: 1; position: relative; overflow: hidden; min-width: 0; }
.scene { display: block; width: 100%; height: 100%; }
.planename { font: 8px "Open Sans", sans-serif; fill: #3a72b8; }
.face { font: 7px "Open Sans", sans-serif; fill: #333; }
.axis { font: 700 7px "Open Sans", sans-serif; }
.z { fill: #5f5fe8; }
.x { fill: #e04a4a; }
.treetoggle { position: absolute; left: 0; top: 153px; width: 17px; height: 18px; background: #fff; border: 1px solid #ddd; border-left: 0; color: #555; }
.sidebuttons { position: absolute; right: 0; top: 127px; border: 1px solid #ddd; border-right: 0; background: #fff; color: #555; }
.sidebuttons button { width: 16px; height: 17px; }
.sidebuttons button + button { border-top: 1px solid #ddd; }
.measure { position: absolute; right: 6px; bottom: 2px; display: flex; align-items: center; gap: 9px; }

.doctabs { display: flex; height: 17px; flex: none; background: #cfcfcf; color: #555; }
.doctabs button { width: 105px; justify-content: flex-start; gap: 2px; padding-left: 6px; background: #e6e6e6; border-right: 1px solid #c4c4c4; }
.doctabs .add { width: 20px; background: #c6c6c6; }
.doctabs .current { background: #fff; color: #333; border-bottom: 2px solid #6b8cc8; }

.edgebar { width: 23px; flex: none; display: flex; flex-direction: column; align-items: center; gap: 11px; padding: 7px 0; }
.edgebottom { margin-top: auto; width: 15px; border-top: 1px solid #ccc; padding-top: 6px; display: flex; flex-direction: column; align-items: center; gap: 10px; }
```
